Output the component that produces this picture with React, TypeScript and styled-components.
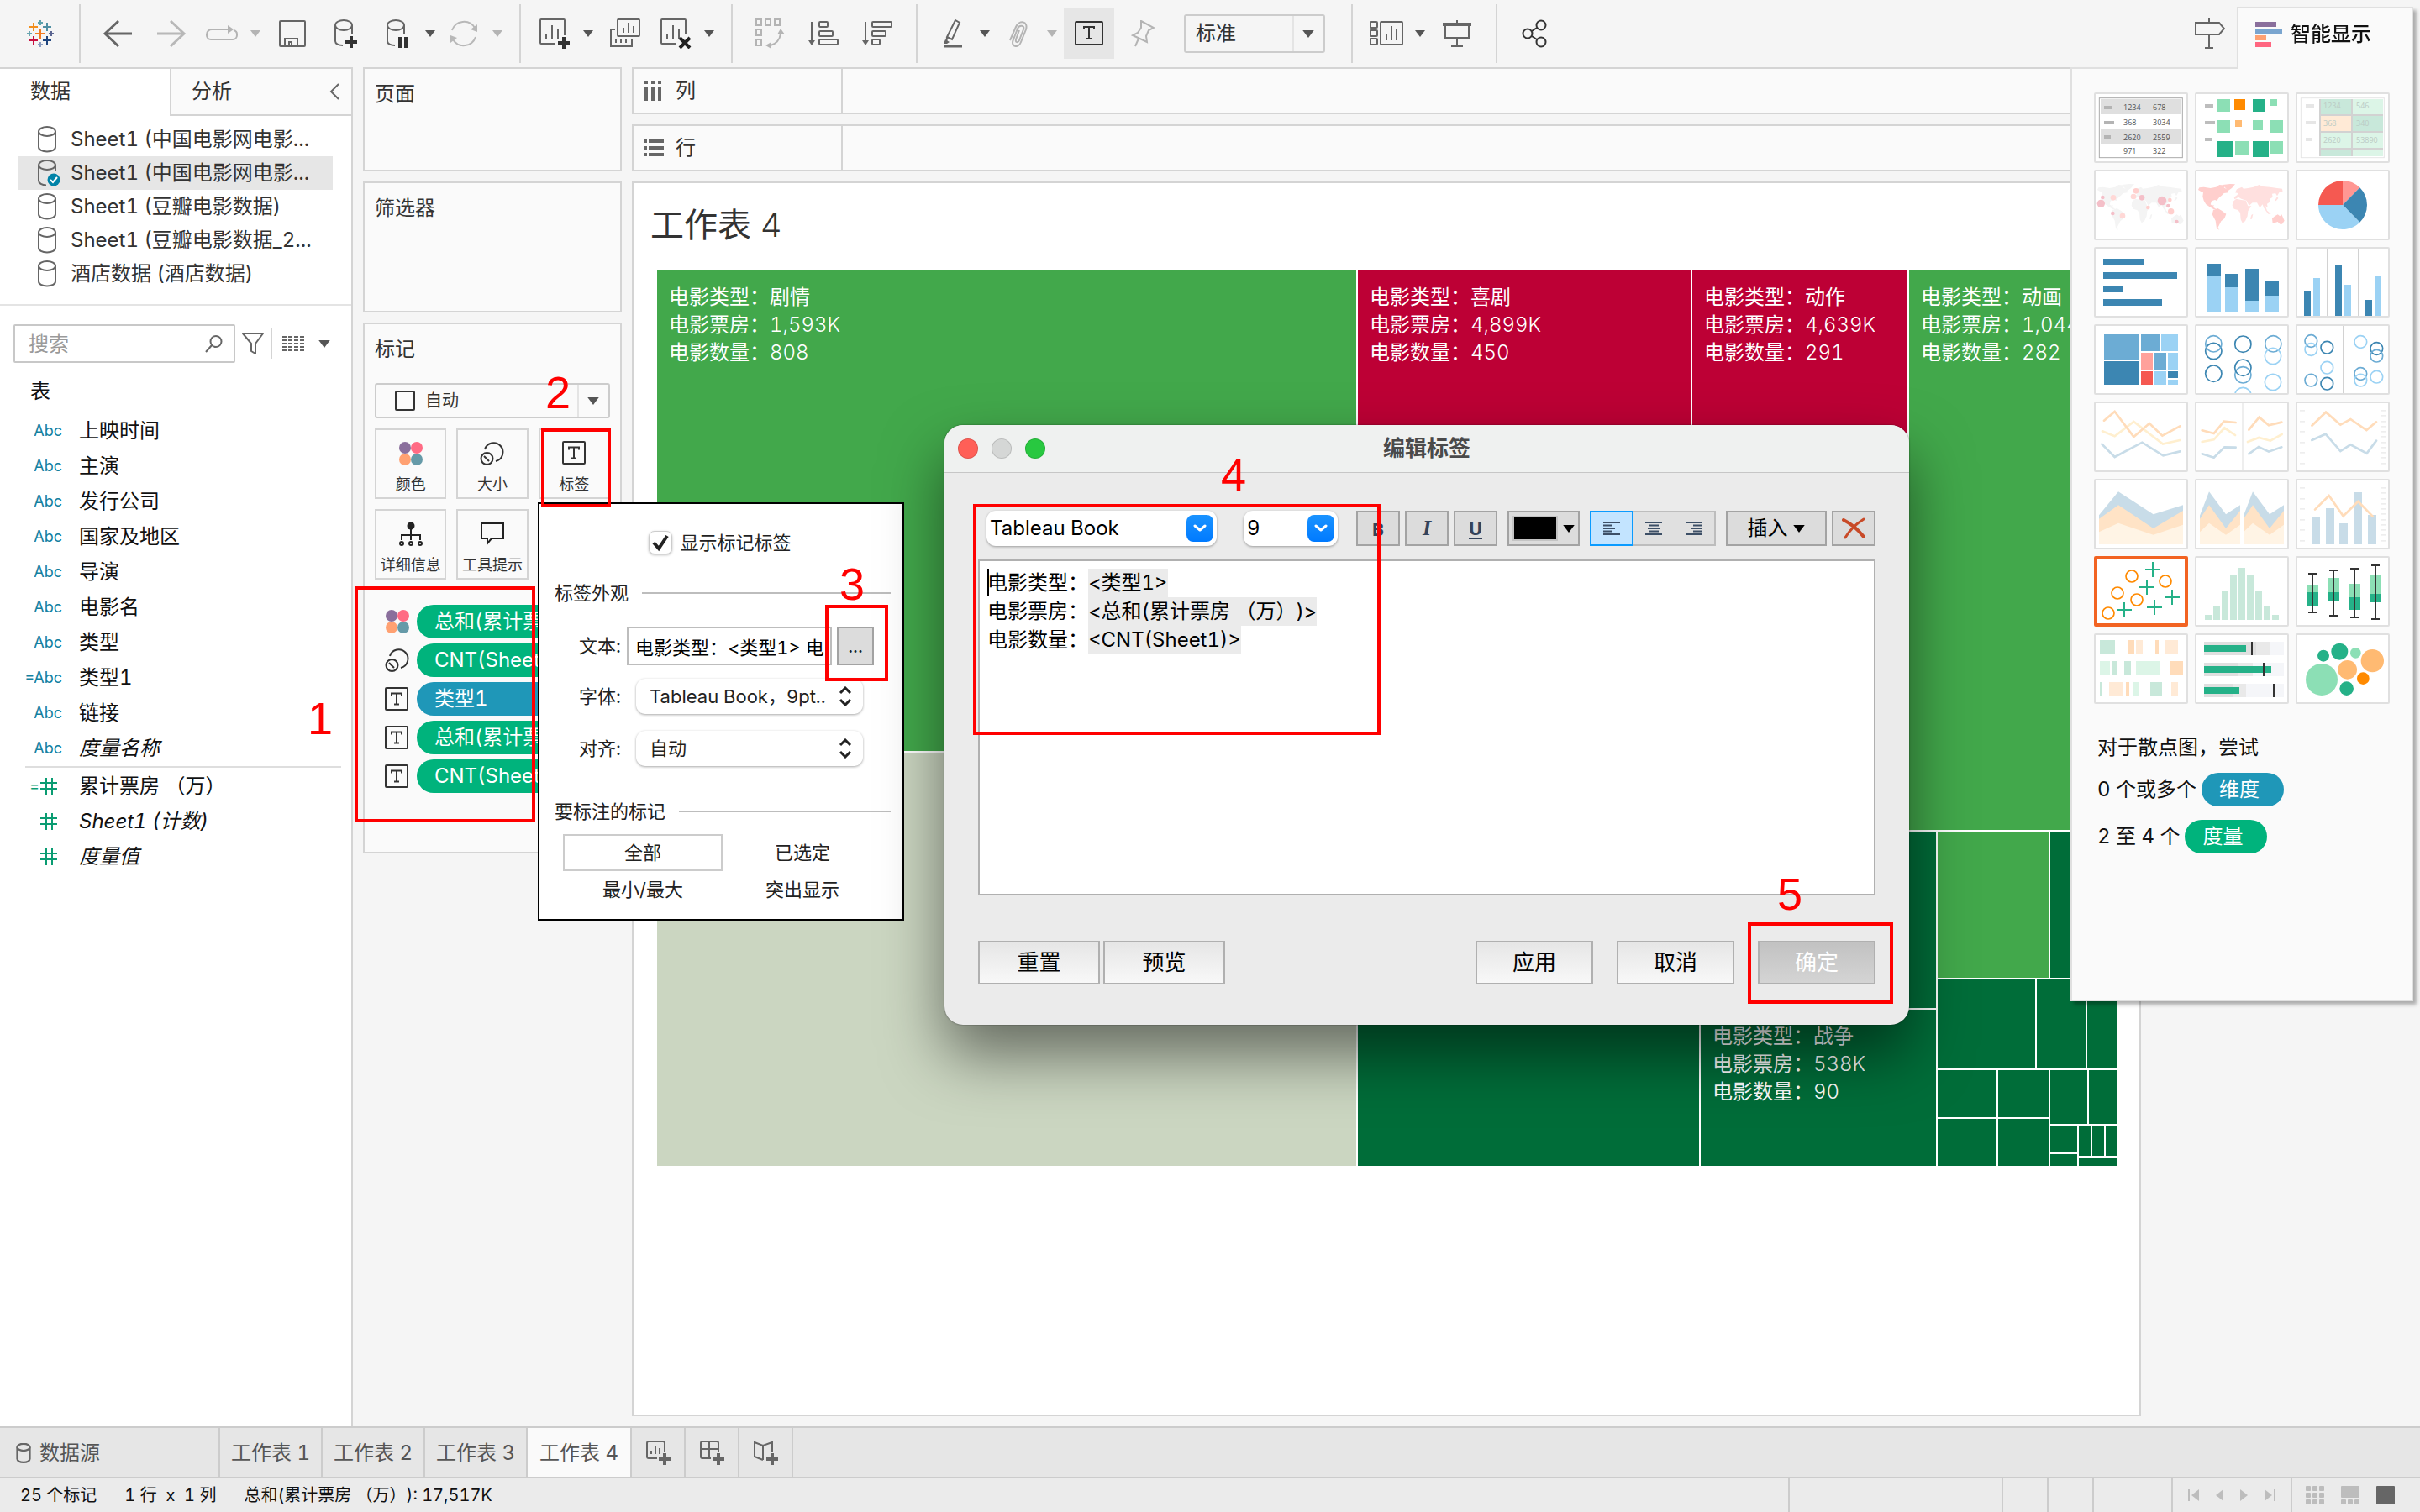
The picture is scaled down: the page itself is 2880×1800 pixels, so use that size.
import React from "react";
import styled, { createGlobalStyle, css } from "styled-components";

const font = `Inter, "Noto Sans CJK SC", sans-serif`;
const line = "#d4d4d4";

const GlobalStyle = createGlobalStyle`
  *, *::before, *::after { box-sizing: border-box; }
  body { margin: 0; background: #f5f5f5; font-family: ${font}; font-size: 24px; line-height: 32px; color: #333; text-spacing-trim: space-all; font-variant-numeric: tabular-nums; }
  button, input, select { font: inherit; color: inherit; margin: 0; padding: 0; border: 0; background: none; border-radius: 0; outline: none; text-spacing-trim: inherit; }
  select { appearance: none; }
  ul { list-style: none; margin: 0; padding: 0; }
  h1, h2, p { margin: 0; font-weight: 400; font-size: inherit; }
  svg { display: block; flex: none; }
`;

/* ---------- icons ---------- */

type SvgProps = { w: number; h: number; box?: string; color?: string; sw?: number; children: React.ReactNode };
const Svg = ({ w, h, box, color = "#666", sw = 2, children }: SvgProps) => (
  <svg width={w} height={h} viewBox={box ?? `0 0 ${w} ${h}`} fill="none" stroke={color} strokeWidth={sw} aria-hidden="true">
    {children}
  </svg>
);

const cross = (x: number, y: number, r: number, c: string, sw = 2) => (
  <path key={`${x}-${y}`} d={`M${x - r} ${y}H${x + r}M${x} ${y - r}V${y + r}`} stroke={c} strokeWidth={sw} />
);

const LogoIcon = () => (
  <Svg w={34} h={34}>
    {cross(17, 17, 6, "#f47b20", 2)}
    {cross(9, 9, 5, "#f28e1c")}
    {cross(25, 9, 5, "#4f8fa3")}
    {cross(9, 25, 5, "#c8103f")}
    {cross(25, 25, 5, "#1f457e")}
    {cross(17, 4, 3, "#5fa2ad")}
    {cross(4, 17, 3, "#6aa5b0")}
    {cross(30, 17, 3, "#5b6591")}
    {cross(17, 30, 3, "#8a9cc0")}
  </Svg>
);
const BackIcon = () => (
  <Svg w={36} h={34} sw={3}><path d="M19 2L3 17L19 32M3 17H35" /></Svg>
);
const ForwardIcon = () => (
  <Svg w={36} h={34} sw={3} color="#b8b8b8"><path d="M17 2L33 17L17 32M33 17H1" /></Svg>
);
const RedoIcon = () => (
  <Svg w={40} h={20} color="#b4b4b4">
    <path d="M28 5H8a6 6 0 0 0-6 6v1a5 5 0 0 0 5 5H33a5 5 0 0 0 5-5V11a5 5 0 0 0-4-5" />
    <path d="M27 0L34 5L27 10Z" fill="#b4b4b4" stroke="none" />
  </Svg>
);
const SaveIcon = () => (
  <Svg w={32} h={32}>
    <rect x={1} y={1} width={30} height={30} rx={1} />
    <path d="M7 31V22H22V31M12 31V26H15V31" />
  </Svg>
);
const DbIcon = ({ small = false }: { small?: boolean }) => (
  <Svg w={small ? 18 : 24} h={small ? 24 : 32} box="0 0 24 32" sw={small ? 3 : 2}>
    <ellipse cx={12} cy={6.5} rx={10} ry={5.5} />
    <path d="M2 6V25C2 28 6 30.5 12 30.5S22 28 22 25V6" />
  </Svg>
);
const DbCheckIcon = () => (
  <Svg w={28} h={32}>
    <ellipse cx={12} cy={6.5} rx={10} ry={5.5} />
    <path d="M2 6V25C2 28 6 30.5 11 30.5M22 6V14" />
    <circle cx={20} cy={24} r={7.5} fill="#0083a8" stroke="none" />
    <path d="M16 24L19 27L24 21" stroke="#fff" />
  </Svg>
);
const DbPlusIcon = () => (
  <Svg w={30} h={36}>
    <ellipse cx={12} cy={8} rx={10} ry={6} />
    <path d="M2 8V27C2 30 6 32 11 32M22 8V19" />
    <path d="M21 21V35M14 28H28" stroke="#333" strokeWidth={4} />
  </Svg>
);
const DbPauseIcon = () => (
  <Svg w={28} h={36}>
    <ellipse cx={13} cy={8} rx={10} ry={6} />
    <path d="M3 8V27C3 30 7 32 12 32M23 8V18" />
    <path d="M18 22V35M25 22V35" stroke="#333" strokeWidth={4} />
  </Svg>
);
const RefreshIcon = () => (
  <Svg w={36} h={34} color="#b8b8b8">
    <path d="M4 13A15 15 0 0 1 31 10M32 21A15 15 0 0 1 5 24" />
    <path d="M34 6V15L26 12ZM2 28V19L10 22Z" fill="#b8b8b8" stroke="none" />
  </Svg>
);
const SheetPlusIcon = () => (
  <Svg w={38} h={36}>
    <path d="M20 30H3a1 1 0 0 1-1-1V2a1 1 0 0 1 1-1H30a1 1 0 0 1 1 1V20M9 24V18M16 24V8M23 24V13" />
    <path d="M30 22V36M23 29H37" stroke="#333" strokeWidth={4} />
  </Svg>
);
const DuplicateIcon = () => (
  <Svg w={38} h={36}>
    <rect x={10} y={1} width={26} height={20} rx={1} />
    <path d="M17 17V11M23 17V5M29 17V9M7 13H2V33H27V24M8 29V24M14 29V24M20 29V24" />
  </Svg>
);
const ClearIcon = () => (
  <Svg w={38} h={36}>
    <path d="M20 30H3a1 1 0 0 1-1-1V2a1 1 0 0 1 1-1H30a1 1 0 0 1 1 1V19M9 24V18M16 24V8M23 24V13" />
    <path d="M24 23L36 35M36 23L24 35" stroke="#222" strokeWidth={4} />
  </Svg>
);
const SwapIcon = () => (
  <Svg w={36} h={36} color="#b4b4b4">
    <rect x={2} y={1} width={6} height={7} /><rect x={13} y={1} width={6} height={7} /><rect x={24} y={1} width={6} height={7} />
    <rect x={2} y={13} width={6} height={7} /><rect x={2} y={25} width={6} height={7} />
    <path d="M31 18C30 26 26 30 19 32" />
    <path d="M27 19H36L31 12ZM20 28V36L13 32Z" fill="#b4b4b4" stroke="none" />
  </Svg>
);
const SortAscIcon = () => (
  <Svg w={36} h={30}>
    <path d="M4 1V26" /><path d="M0 23H8L4 29Z" fill="#666" stroke="none" />
    <rect x={13} y={1} width={10} height={6} rx={1} /><rect x={13} y={12} width={16} height={6} rx={1} /><rect x={13} y={22} width={22} height={6} rx={1} />
  </Svg>
);
const SortDescIcon = () => (
  <Svg w={36} h={30}>
    <path d="M4 1V26" /><path d="M0 23H8L4 29Z" fill="#666" stroke="none" />
    <rect x={12} y={1} width={23} height={6} rx={1} /><rect x={12} y={12} width={16} height={6} rx={1} /><rect x={12} y={22} width={9} height={6} rx={1} />
  </Svg>
);
const PenIcon = () => (
  <Svg w={28} h={34}>
    <path d="M19 1L24 4L15 24L9 21ZM9 22L8 28" />
    <path d="M5 29L7 24L12 27L9 29Z" fill="#666" stroke="none" />
    <path d="M5 32H27" strokeWidth={3} />
  </Svg>
);
const ClipIcon = () => (
  <Svg w={26} h={32} color="#b4b4b4">
    <path d="M14 12L10 23C9 27 13 27 14 24L19 11C21 6 14 5 12 10L7 23C3 32 13 34 16 26L22 11C25 1 14-1 10 8L3 24" />
  </Svg>
);
const TextBoxIcon = () => (
  <Svg w={28} h={28} color="#333">
    <rect x={1} y={1} width={26} height={26} rx={1} />
    <path d="M8 10.5V7.5H20V10.5M14 7.5V20.5M11 20.5H17" />
  </Svg>
);
const LabelToolIcon = () => (
  <Svg w={34} h={30} color="#333">
    <rect x={1} y={1} width={32} height={27} rx={1} />
    <path d="M11 10V7H23V10M17 7V21M14 21H20" />
  </Svg>
);
const PinIcon = () => (
  <Svg w={28} h={32} color="#b4b4b4">
    <path d="M12 1L27 9L21 12L18 19L19 26L2 18L8 15L12 9ZM9 22L5 31" />
  </Svg>
);
const CardsIcon = () => (
  <Svg w={40} h={30}>
    <rect x={1} y={1} width={8} height={7} rx={1} /><rect x={1} y={11} width={8} height={7} rx={1} /><rect x={1} y={21} width={8} height={7} rx={1} />
    <rect x={13} y={1} width={26} height={27} rx={1} />
    <path d="M20 23V16M26 23V6M32 23V10" />
  </Svg>
);
const PresentIcon = () => (
  <Svg w={36} h={34}>
    <path d="M1 6H35" strokeWidth={4} /><path d="M18 1V6M4 8V22H32V8M18 22V32M11 32H25" />
  </Svg>
);
const ShareIcon = () => (
  <Svg w={30} h={34} color="#333">
    <circle cx={7} cy={17} r={5.5} /><circle cx={23} cy={7} r={5.5} /><circle cx={23} cy={27} r={5.5} />
    <path d="M12 14L18 10M12 20L18 24" />
  </Svg>
);
const SignpostIcon = () => (
  <Svg w={36} h={38}>
    <path d="M1 6H29L35 13L29 20H1ZM17 1V6M17 20V36M12 36H22" />
  </Svg>
);
const Caret = ({ w = 12, h = 8, color = "#555" }: { w?: number; h?: number; color?: string }) => (
  <Svg w={w} h={h} box="0 0 12 8"><path d="M0 0H12L6 8Z" fill={color} stroke="none" /></Svg>
);
const ChevronLeft = () => <Svg w={12} h={20}><path d="M11 1L2 10L11 19" /></Svg>;
const SearchIcon = () => <Svg w={22} h={22}><circle cx={13} cy={8.5} r={6.5} /><path d="M8 13L1 21" /></Svg>;
const FilterIcon = () => <Svg w={26} h={26}><path d="M1 1H25L16 13V25L11 22V13Z" strokeLinejoin="round" /></Svg>;
const ListIcon = () => (
  <Svg w={26} h={20}><path d="M0 2H26M0 6H26M0 10H26M0 14H26M0 18H26" strokeDasharray="5 2" /></Svg>
);
const ColumnsIcon = () => (
  <Svg w={22} h={24} sw={4}><path d="M3 0V4M11 0V4M19 0V4M3 7V24M11 7V24M19 7V24" /></Svg>
);
const RowsIcon = () => (
  <Svg w={24} h={20} sw={4}><path d="M0 2H4M0 10H4M0 18H4M6 2H24M6 10H24M6 18H24" /></Svg>
);
const ColorIcon = () => (
  <Svg w={30} h={30}>
    <g stroke="none">
      <circle cx={8} cy={8} r={7} fill="#8a6f9c" /><circle cx={22} cy={8} r={7} fill="#ff6b84" />
      <circle cx={8} cy={22} r={7} fill="#ffa172" /><circle cx={22} cy={22} r={7} fill="#659aa8" />
    </g>
  </Svg>
);
const SizeIcon = () => (
  <Svg w={30} h={30} color="#333">
    <circle cx={8.5} cy={21} r={7} /><path d="M5 18L11 24M6 10A11 11 0 1 1 19 24" />
  </Svg>
);
const DetailIcon = () => (
  <Svg w={28} h={30} color="#222">
    <circle cx={14} cy={5} r={4.5} fill="#222" stroke="none" />
    <path d="M14 9V22M3 22V16H25V22" /><circle cx={3} cy={26} r={2} /><circle cx={14} cy={26} r={2} /><circle cx={25} cy={26} r={2} />
  </Svg>
);
const TooltipIcon = () => (
  <Svg w={30} h={28} color="#222"><path d="M2 2H28V20H14L9 26V20H2Z" /></Svg>
);
const HashIcon = () => (
  <Svg w={22} h={22} color="#0a9c72"><path d="M8 1V21M15 1V21M1 7H21M1 14H21" /></Svg>
);
const UpDownIcon = () => (
  <Svg w={18} h={24} color="#222" sw={3}><path d="M3 8L9 2L15 8M3 16L9 22L15 16" /></Svg>
);
const AlignIcon = ({ kind }: { kind: "left" | "center" | "right" }) => {
  const long = kind === "left" ? [0, 14] : kind === "center" ? [3, 17] : [6, 20];
  const short = kind === "left" ? [0, 11] : kind === "center" ? [4, 16] : [9, 20];
  return (
    <Svg w={20} h={18} color="#3d4f66">
      <path d={`M0 2H20M${short[0]} 5.5H${short[1]}M${long[0]} 9H${long[1]}M${short[0]} 12.5H${short[1]}M0 16H20`} />
    </Svg>
  );
};
const DeleteIcon = () => (
  <Svg w={28} h={26} color="#c84a28" sw={4}><path d="M2 3C10 7 19 14 26 23" strokeLinecap="round" /><path d="M26 2C18 7 10 14 4 24" strokeWidth={3} strokeLinecap="round" /></Svg>
);
const CheckIcon = () => (
  <Svg w={28} h={28} color="#222" sw={4}><path d="M6 14L12 21L22 6" /></Svg>
);
const ShowMeIcon = () => (
  <Svg w={32} h={30}>
    <g stroke="none"><rect width={25} height={6} fill="#8a6f9c" /><rect y={8} width={32} height={6} fill="#7aa5cf" /><rect y={16} width={13} height={6} fill="#ffa172" /><rect y={24} width={19} height={6} fill="#ff6680" /></g>
  </Svg>
);
const NewSheetIcon = () => (
  <Svg w={30} h={30}><path d="M14 21H4a2 2 0 0 1-2-2V3a2 2 0 0 1 2-2H21a2 2 0 0 1 2 2V13M7 16V12M12 16V7M17 16V9" /><path d="M23 15V29M16 22H30" strokeWidth={4} /></Svg>
);
const NewDashIcon = () => (
  <Svg w={30} h={30}><path d="M14 21H4a2 2 0 0 1-2-2V3a2 2 0 0 1 2-2H21a2 2 0 0 1 2 2V13M2 10H23M12 1V21" /><path d="M23 15V29M16 22H30" strokeWidth={4} /></Svg>
);
const NewStoryIcon = () => (
  <Svg w={30} h={30}><path d="M12 23L2 19V2L12 6L23 2V13M12 6V23" /><path d="M23 15V29M16 22H30" strokeWidth={4} /></Svg>
);

/* ---------- chart thumbnails ---------- */

const B1 = "#3c86b2", B2 = "#6cacd4", B3 = "#9bd2f4";
const G1 = "#25b188", G2 = "#8cdfb5", O1 = "#ff8a00", O2 = "#ffba72";
type R = [number, number, number, number, string];
const rects = (list: R[]) => list.map(([x, y, w, h, f], i) => <rect key={i} x={x} y={y} width={w} height={h} fill={f} />);
type C = [number, number, number, string];
const rings = (list: C[]) => list.map(([x, y, r, c], i) => <circle key={i} cx={x} cy={y} r={r} fill="none" stroke={c} strokeWidth={5} />);
const discs = (list: C[]) => list.map(([x, y, r, c], i) => <circle key={i} cx={x} cy={y} r={r} fill={c} />);
const poly = (d: string, c: string) => <path d={d} fill="none" stroke={c} strokeWidth={8} strokeLinecap="round" />;
const ticks = (x: number, ys: number[]) => ys.map((y) => <rect key={`${x}${y}`} x={x} y={y - 3} width={18} height={5} fill="#eee" />);
const words = (list: [number, number, string][], c: string) =>
  list.map(([x, y, t]) => <text key={t} x={x} y={y} fontSize={27} fill={c} fontFamily={`"Open Sans", sans-serif`}>{t}</text>);

const WorldMap = ({ west, east }: { west: string; east: string }) => (
  <>
    <g fill={west}>
      <path d="M6 66L10 58L26 56L50 60L70 56L82 48L106 50L98 58L112 66L114 76L98 78L90 86L82 92L76 100L74 106L66 102L54 106L50 118L56 122L62 120L60 128L70 134L62 136L46 126L34 118L26 104L22 90L24 76L16 72Z" />
      <path d="M94 48L120 45L138 46L126 60L112 70L106 62Z" />
      <path d="M60 138L76 132L90 140L106 152L100 168L88 178L82 190L76 202L82 209L72 204L68 176L56 154Z" />
      <path d="M270 168L280 160L290 154L298 160L304 154L314 176L306 188L298 188L290 180L272 186Z" />
    </g>
    <g fill={east}>
      <path d="M130 108L142 98L160 102L176 104L184 124L196 124L184 142L182 160L174 178L164 184L158 172L156 148L148 138L134 134L128 122Z" />
      <path d="M134 92L146 84L148 78L138 76L144 64L162 56L168 62L184 60L204 56L224 48L236 54L262 56L288 60L306 62L308 74L296 74L288 88L282 78L270 80L272 92L262 98L264 108L252 116L254 128L246 124L252 140L266 152L256 152L240 130L236 118L226 130L216 112L200 112L188 122L178 104L160 98L150 92L136 100Z" />
      <path d="M196 156L202 152L198 170L192 170ZM280 104L288 90L292 96L284 106Z" />
    </g>
  </>
);

const thumbs: { name: string; art: React.ReactNode }[] = [
  { name: "文本表", art: <><rect x={13} y={14} width={297} height={213} fill="#fff" stroke="#aaa" strokeWidth={3} />{rects([[18, 18, 288, 54, "#dfdfdf"], [18, 126, 288, 54, "#dfdfdf"], [30, 42, 30, 12, "#b4b4b4"], [30, 96, 36, 12, "#b4b4b4"], [30, 147, 24, 12, "#b4b4b4"]])}{words([[99, 56, "1234"], [204, 56, "678"], [99, 110, "368"], [204, 110, "3034"], [99, 164, "2620"], [204, 164, "2559"], [99, 212, "971"], [204, 212, "322"]], "#555")}</> },
  { name: "热图", art: rects([[30, 36, 30, 12, "#bdbdbd"], [30, 96, 36, 12, "#bdbdbd"], [30, 156, 24, 12, "#bdbdbd"], [75, 18, 45, 45, G2], [135, 18, 39, 39, O1], [201, 18, 45, 45, G1], [264, 18, 24, 24, G2], [75, 93, 45, 45, G2], [138, 93, 24, 24, O2], [201, 93, 36, 36, G2], [264, 93, 45, 45, G2], [75, 168, 57, 57, G1], [138, 168, 48, 48, G2], [201, 168, 57, 57, G1], [264, 168, 45, 45, G2]]) },
  { name: "突出显示表", art: <><rect x={13} y={14} width={297} height={213} fill="#fff" stroke="#e6e6e6" strokeWidth={3} />{rects([[78, 18, 228, 204, "#d2d2d2"], [84, 18, 108, 54, "#c8e8da"], [198, 18, 108, 54, "#dcf5e7"], [84, 78, 108, 54, "#ffead6"], [198, 78, 108, 54, "#c8e8da"], [84, 138, 108, 54, "#dcf5e7"], [198, 138, 108, 54, "#dcf5e7"], [84, 198, 108, 24, "#c8e8da"], [198, 198, 108, 24, "#dcf5e7"], [30, 36, 30, 12, "#e6e6e6"], [30, 96, 36, 12, "#e6e6e6"], [30, 156, 24, 12, "#e6e6e6"]])}{words([[93, 51, "1234"], [210, 51, "546"], [93, 114, "368"], [210, 114, "340"], [93, 174, "2620"], [210, 174, "53890"]], "#bccbc4")}</> },
  { name: "符号地图", art: <><WorldMap west="#f4f4f4" east="#f4f4f4" />{discs([[19, 115, 14, "#f4bfc8"], [25, 93, 7, "#f4bfc8"], [63, 94, 10, "#ffd8d6"], [61, 150, 7, "#f4bfc8"], [96, 159, 10, "#ffd8d6"], [144, 70, 10, "#ffcfcd"], [135, 90, 10, "#ffd8d6"], [165, 94, 10, "#f4bfc8"], [187, 129, 7, "#ffcfcd"], [237, 105, 16, "#f4bfc8"], [265, 102, 7, "#ffcfcd"], [259, 123, 7, "#f4bfc8"], [269, 143, 11, "#ffcfcd"], [289, 180, 7, "#f4bfc8"]])}</> },
  { name: "地图", art: <WorldMap west="#ffcfcd" east="#ffe0df" /> },
  { name: "饼图", art: <><path d="M162 120V33A87 87 0 0 1 223 58Z" fill="#ff9793" /><path d="M162 120L223 58A87 87 0 0 1 223 182Z" fill={B1} /><path d="M162 120L223 182A87 87 0 0 1 75 120Z" fill={B3} /><path d="M162 120H75A87 87 0 0 1 162 33Z" fill="#f55951" /></> },
  { name: "水平条", art: rects([[27, 36, 144, 24, B1], [27, 84, 264, 24, B1], [27, 132, 72, 24, B1], [27, 180, 210, 24, B1]]) },
  { name: "堆叠条", art: rects([[39, 54, 48, 42, B1], [39, 96, 48, 132, B3], [102, 90, 48, 48, B1], [102, 138, 48, 90, B3], [174, 72, 48, 114, B1], [174, 186, 48, 42, B3], [246, 114, 48, 54, B1], [246, 168, 48, 60, B3]]) },
  { name: "并排条", art: rects([[105, 0, 6, 240, "#d2d2d2"], [216, 0, 6, 240, "#d2d2d2"], [24, 153, 24, 87, B1], [57, 105, 24, 135, B3], [135, 60, 24, 180, B1], [168, 129, 24, 111, B3], [243, 183, 24, 57, B1], [276, 96, 24, 144, B3]]) },
  { name: "树状图", art: rects([[30, 30, 126, 90, B2], [30, 126, 126, 84, B1], [162, 30, 66, 60, B2], [234, 30, 60, 60, B3], [162, 96, 42, 60, "#ffa19b"], [210, 96, 42, 60, B2], [258, 96, 36, 60, B3], [162, 162, 42, 48, "#f55951"], [210, 162, 42, 48, B3], [258, 162, 36, 24, B1], [258, 192, 36, 18, B3]]) },
  { name: "圆视图", art: rings([[61, 90, 29, B1], [61, 64, 29, B2], [61, 170, 29, B1], [166, 65, 29, B1], [166, 175, 29, B2], [166, 149, 29, B1], [166, 249, 29, B3], [274, 64, 29, B2], [273, 108, 29, B3], [273, 201, 29, B3]]) },
  { name: "并排圆", art: <>{rects([[162, 0, 6, 240, "#d2d2d2"]])}{rings([[49, 54, 22, B2], [49, 84, 22, B3], [106, 77, 22, B1], [106, 149, 22, B3], [49, 194, 22, B2], [106, 206, 22, B1], [226, 57, 22, B3], [283, 81, 22, B1], [283, 107, 22, B2], [226, 171, 22, B2], [226, 194, 22, B3], [283, 182, 22, B3]])}</> },
  { name: "线（连续）", art: <>{poly("M24 100L68 118L136 66L240 146L301 132", "#ffefcf")}{poly("M30 62L68 30L136 120L192 72L238 116L301 82", "#ffdcba")}{poly("M22 146L68 192L166 140L241 187L301 172", "#c8dce8")}</> },
  { name: "线（离散）", art: <>{rects([[162, 0, 6, 240, "#eee"]])}{poly("M20 138L62 130L100 88L138 114M183 138L223 123L264 134L305 111", "#ffefcf")}{poly("M20 97L62 108L98 65L140 69M187 95L224 50L258 79L304 68", "#ffdcba")}{poly("M20 181L62 194L100 157L140 158M187 181L222 156L258 173L304 157", "#c8dce8")}</> },
  { name: "双线", art: <>{ticks(9, [27, 66, 102, 141, 177, 216])}{ticks(300, [27, 45, 66, 84, 102, 120, 141, 159, 177, 195, 216])}{poly("M52 80L102 32L154 77L190 57L247 96L282 67", "#ffdcba")}{poly("M52 132L101 110L154 171L190 148L248 179L282 134", "#c8dce8")}</> },
  { name: "面积图（连续）", art: <><path d="M12 124L81 40L206 121L312 88V228H12Z" fill="#c8dce8" /><path d="M12 137L81 88L206 171L312 108V228H12Z" fill="#ffe3c6" /><path d="M12 184L81 152L206 194L312 158V228H12Z" fill="#fff4e5" /></> },
  { name: "面积图（离散）", art: <>{[0, 156].map((x) => <g key={x} transform={`translate(${x} 0)`}><path d="M12 125L45 40L105 121L156 88V228H12Z" fill="#c8dce8" /><path d="M12 137L45 88L105 171L156 108V228H12Z" fill="#ffe3c6" /><path d="M12 184L45 152L105 194L156 158V228H12Z" fill="#fff4e5" /></g>)}</> },
  { name: "双组合", art: <>{ticks(9, [27, 66, 102, 141, 177, 216])}{ticks(300, [27, 45, 66, 84, 102, 120, 141, 159, 177, 195, 216])}{rects([[51, 129, 30, 99, "#c8dce8"], [102, 99, 30, 129, "#c8dce8"], [150, 153, 30, 75, "#c8dce8"], [201, 42, 30, 186, "#c8dce8"], [252, 123, 30, 105, "#c8dce8"]])}{poly("M63 104L113 54L164 127L217 75L269 128", "#ffdcba")}</> },
  { name: "散点图", art: <>{rings([[45, 198, 21, O1], [78, 126, 21, O1], [129, 66, 21, O1], [147, 150, 21, O1], [249, 84, 21, O1]])}{cross(204, 42, 27, G1, 6)}{cross(183, 105, 27, G1, 6)}{cross(273, 141, 27, G1, 6)}{cross(210, 177, 27, G1, 6)}{cross(102, 186, 27, G1, 6)}</> },
  { name: "直方图", art: rects([[30, 204, 24, 18, "#c8e8da"], [60, 174, 24, 48, "#c8e8da"], [90, 120, 24, 102, "#c8e8da"], [120, 60, 24, 162, "#c8e8da"], [150, 36, 24, 186, "#c8e8da"], [180, 60, 24, 162, "#c8e8da"], [210, 120, 24, 102, "#c8e8da"], [240, 174, 24, 48, "#c8e8da"], [270, 204, 24, 18, "#c8e8da"]]) },
  { name: "盒须图", art: <>{rects([[33, 99, 42, 24, G2], [33, 123, 42, 51, G1], [108, 72, 42, 51, G2], [108, 123, 42, 30, G1], [183, 93, 42, 48, G2], [183, 141, 42, 45, G1], [258, 60, 42, 69, G2], [258, 129, 42, 30, G1]])}<path d="M54 57V195M39 57H69M39 195H69M129 45V207M114 45H144M114 207H144M204 39V213M189 39H219M189 213H219M279 27V219M264 27H294M264 219H294" stroke="#333" strokeWidth={6} /></> },
  { name: "甘特图", art: rects([[15, 18, 54, 48, "#c8e8da"], [114, 18, 24, 48, "#ffdcba"], [144, 18, 24, 48, "#ffead6"], [213, 18, 12, 48, "#ffdcba"], [246, 18, 48, 48, "#ffead6"], [15, 93, 36, 48, "#dcf5e7"], [57, 93, 18, 48, "#c8e8da"], [102, 93, 24, 48, "#c8e8da"], [144, 93, 87, 48, "#dcf5e7"], [264, 93, 48, 48, "#ffdcba"], [15, 168, 9, 48, "#c8e8da"], [48, 168, 51, 48, "#ffead6"], [108, 168, 12, 48, "#ffdcba"], [132, 168, 24, 48, "#dcf5e7"], [195, 168, 42, 48, "#c8e8da"], [270, 168, 24, 48, "#ffead6"]]) },
  { name: "靶心图", art: rects([[27, 24, 285, 48, "#f5f6f9"], [27, 24, 237, 48, "#e9e9e9"], [27, 24, 186, 48, "#dfdfdf"], [27, 99, 285, 48, "#f5f6f9"], [27, 99, 174, 48, "#e9e9e9"], [27, 99, 120, 48, "#dfdfdf"], [27, 174, 285, 48, "#f5f6f9"], [27, 174, 150, 48, "#e9e9e9"], [27, 174, 102, 48, "#dfdfdf"], [27, 36, 150, 24, G1], [27, 111, 240, 24, G1], [27, 186, 126, 24, G1], [195, 24, 6, 48, "#333"], [237, 99, 6, 48, "#333"], [273, 174, 6, 48, "#333"]]) },
  { name: "填充气泡图", art: discs([[87, 159, 57, G2], [93, 74, 21, G1], [151, 59, 30, G1], [208, 64, 19, G2], [268, 92, 41, O2], [179, 124, 34, O2], [235, 155, 22, O1], [176, 191, 25, G1]]) },
];

/* ---------- frame and toolbar ---------- */

const Page = styled.div`
  position: relative;
  display: flex;
  flex-direction: column;
  min-height: 100vh;
  overflow: hidden;
`;
const Toolbar = styled.header`
  display: flex;
  align-items: center;
  height: 80px;
`;
const Logo = styled.div`padding: 0 15px 0 31px;`;
const Divider = styled.span`
  width: 2px;
  height: 70px;
  margin: 0 12px 0 14px;
  background: ${line};
`;
const Tool = styled.button<{ $active?: boolean; $push?: boolean }>`
  display: grid;
  place-items: center;
  width: 60px;
  height: 60px;
  margin: 0 2px;
  background: ${(p) => (p.$active ? "#e6e6e6" : "none")};
  ${(p) => p.$push && css`margin: 0 220px 0 auto;`}
`;
const SplitTool = styled.button`
  display: grid;
  grid-template-columns: 56px 24px;
  place-items: center;
  height: 60px;
`;
const SelectBox = styled.div<{ $w?: number; $h: number }>`
  display: grid;
  grid-template-columns: 1fr 37px;
  align-items: center;
  width: ${(p) => (p.$w ? `${p.$w}px` : "auto")};
  height: ${(p) => p.$h}px;
  border: 2px solid #ccc;
  border-radius: 3px;
  > * { grid-row: 1; }
  > select { grid-column: 1 / 3; height: 100%; width: 100%; padding-left: 12px; }
  > svg { grid-column: 2; justify-self: center; pointer-events: none; }
  > i { grid-column: 2; height: 100%; border-left: 2px solid #e4e4e4; pointer-events: none; }
`;
const ToolSelect = styled(SelectBox)`margin: 0 17px;`;

const split = (label: string, icon: React.ReactNode, off = false) => (
  <SplitTool aria-label={label}>{icon}<Caret color={off ? "#b4b4b4" : "#555"} /></SplitTool>
);

const TopBar = () => (
  <Toolbar>
    <Logo><LogoIcon /></Logo>
    <Divider />
    <Tool aria-label="撤消"><BackIcon /></Tool>
    <Tool aria-label="重做"><ForwardIcon /></Tool>
    {split("重播", <RedoIcon />, true)}
    <Tool aria-label="保存"><SaveIcon /></Tool>
    <Tool aria-label="新建数据源"><DbPlusIcon /></Tool>
    {split("暂停更新", <DbPauseIcon />)}
    {split("刷新", <RefreshIcon />, true)}
    <Divider />
    {split("新建工作表", <SheetPlusIcon />)}
    <Tool aria-label="复制"><DuplicateIcon /></Tool>
    {split("清除", <ClearIcon />)}
    <Divider />
    <Tool aria-label="交换行和列"><SwapIcon /></Tool>
    <Tool aria-label="升序"><SortAscIcon /></Tool>
    <Tool aria-label="降序"><SortDescIcon /></Tool>
    <Divider />
    {split("突出显示", <PenIcon />)}
    {split("分组", <ClipIcon />, true)}
    <Tool aria-label="显示标记标签" $active><LabelToolIcon /></Tool>
    <Tool aria-label="固定轴"><PinIcon /></Tool>
    <ToolSelect $w={168} $h={46}>
      <select aria-label="适合"><option>标准</option></select>
      <i /><Caret w={14} h={9} />
    </ToolSelect>
    <Divider />
    {split("显示卡", <CardsIcon />)}
    <Tool aria-label="演示模式"><PresentIcon /></Tool>
    <Divider />
    <Tool aria-label="共享"><ShareIcon /></Tool>
    <Tool aria-label="数据指南" $push><SignpostIcon /></Tool>
  </Toolbar>
);

/* ---------- data pane ---------- */

const Body = styled.div`
  display: flex;
  flex: 1;
  gap: 12px;
`;
const Sidebar = styled.aside`
  flex: none;
  width: 420px;
  background: #fff;
  border: solid ${line};
  border-width: 2px 2px 0 0;
`;
const PaneTabs = styled.div`
  display: grid;
  grid-template-columns: 202px 1fr;
  height: 56px;
`;
const PaneTab = styled.button<{ $idle?: boolean }>`
  display: flex;
  align-items: center;
  justify-content: space-between;
  padding: 0 14px 2px 36px;
  ${(p) => p.$idle && css`
    padding: 0 14px 0 24px;
    background: #fafafa;
    border: solid ${line};
    border-width: 0 0 2px 2px;
  `}
`;
const Sources = styled.ul`
  padding: 8px 22px 16px;
  border-bottom: 2px solid #e4e4e4;
`;
const Source = styled.li<{ $on?: boolean }>`
  display: flex;
  align-items: center;
  height: 40px;
  padding-left: 22px;
  white-space: nowrap;
  background: ${(p) => (p.$on ? "#e6e6e6" : "none")};
  > span { width: 40px; flex: none; }
`;
const SearchRow = styled.div`
  display: flex;
  align-items: center;
  gap: 8px;
  padding: 22px 24px 18px 16px;
`;
const SearchBox = styled.label`
  display: flex;
  align-items: center;
  width: 264px;
  height: 46px;
  padding: 0 12px 0 16px;
  border: 2px solid #c8c8c8;
  border-radius: 2px;
  > input { flex: 1; min-width: 0; height: 100%; }
  > input::placeholder { color: #9a9a9a; opacity: 1; }
`;
const PlainButton = styled.button`display: grid; place-items: center;`;
const ViewButton = styled(PlainButton)`
  grid-auto-flow: column;
  gap: 16px;
  height: 36px;
  padding-left: 12px;
  border-left: 2px solid ${line};
`;
const GroupTitle = styled.h2`
  padding: 0 36px 10px;
  color: #111;
`;
const Fields = styled.ul`
  color: #111;
  & + & {
    margin: 0 12px 0 30px;
    padding-top: 1px;
    border-top: 2px solid #dedede;
  }
  & + & > li { margin-left: -30px; }
`;
const Field = styled.li<{ $italic?: boolean }>`
  display: flex;
  align-items: center;
  height: 42px;
  font-style: ${(p) => (p.$italic ? "italic" : "normal")};
`;
const FieldType = styled.span<{ $measure?: boolean }>`
  display: flex;
  align-items: center;
  justify-content: flex-end;
  width: 94px;
  padding-right: ${(p) => (p.$measure ? 25 : 20)}px;
  font-size: 18px;
  font-style: normal;
  color: ${(p) => (p.$measure ? "#0a9c72" : "#14809f")};
`;

const sources = ["Sheet1 (中国电影网电影...", "Sheet1 (中国电影网电影...", "Sheet1 (豆瓣电影数据)", "Sheet1 (豆瓣电影数据_2...", "酒店数据 (酒店数据)"];
const dims = ["上映时间", "主演", "发行公司", "国家及地区", "导演", "电影名", "类型", "类型1", "链接", "度量名称"];
const measures = ["累计票房 （万）", "Sheet1 (计数)", "度量值"];

const DataPane = () => (
  <Sidebar>
    <PaneTabs>
      <PaneTab>数据</PaneTab>
      <PaneTab $idle>分析<ChevronLeft /></PaneTab>
    </PaneTabs>
    <Sources>
      {sources.map((s, i) => (
        <Source key={i} $on={i === 1}><span>{i === 1 ? <DbCheckIcon /> : <DbIcon />}</span>{s}</Source>
      ))}
    </Sources>
    <SearchRow>
      <SearchBox><input type="text" placeholder="搜索" aria-label="搜索" /><SearchIcon /></SearchBox>
      <PlainButton aria-label="筛选"><FilterIcon /></PlainButton>
      <ViewButton aria-label="视图"><ListIcon /><Caret w={16} h={9} /></ViewButton>
    </SearchRow>
    <GroupTitle>表</GroupTitle>
    <Fields>
      {dims.map((d) => (
        <Field key={d} $italic={d === "度量名称"}><FieldType>{d === "类型1" ? "=Abc" : "Abc"}</FieldType>{d}</Field>
      ))}
    </Fields>
    <Fields>
      {measures.map((m, i) => (
        <Field key={m} $italic={i > 0}><FieldType $measure>{i === 0 && "="}<HashIcon /></FieldType>{m}</Field>
      ))}
    </Fields>
  </Sidebar>
);

/* ---------- cards ---------- */

const Cards = styled.div`
  display: flex;
  flex: none;
  flex-direction: column;
  gap: 12px;
  width: 308px;
`;
const Card = styled.section<{ $h?: number }>`
  min-height: ${(p) => p.$h ?? 0}px;
  padding: 14px 12px;
  background: #fafafa;
  border: 2px solid ${line};
`;
const MarkSelect = styled(SelectBox)`
  margin: 24px 0 12px;
  font-size: 20px;
  > select { padding-left: 58px; }
  > b { grid-column: 1; width: 24px; height: 24px; margin-left: 22px; border: 2px solid #333; border-radius: 2px; pointer-events: none; }
`;
const MarkGrid = styled.div`
  display: grid;
  grid-template-columns: repeat(3, 1fr);
  gap: 12px;
`;
const MarkButton = styled.button`
  display: flex;
  flex-direction: column;
  align-items: center;
  justify-content: space-between;
  height: 84px;
  padding: 13px 0 3px;
  font-size: 18px;
  line-height: 24px;
  white-space: nowrap;
  border: 2px solid ${line};
`;
const Pills = styled.ul`
  display: grid;
  gap: 6px;
  padding: 30px 0 56px 12px;
`;
const PillRow = styled.li`
  display: grid;
  grid-template-columns: 38px 1fr;
  align-items: center;
`;
const Pill = styled.span<{ $blue?: boolean }>`
  height: 40px;
  padding: 0 21px;
  overflow: hidden;
  line-height: 40px;
  white-space: nowrap;
  color: #fff;
  background: ${(p) => (p.$blue ? "#1f97b8" : "#00b37c")};
  border-radius: 20px;
`;

const Shelves = () => (
  <Cards>
    <Card $h={124}>页面</Card>
    <Card $h={156}>筛选器</Card>
    <Card>
      <h2>标记</h2>
      <MarkSelect $h={42}>
        <select aria-label="标记类型"><option>自动</option></select>
        <b /><i /><Caret w={14} h={9} />
      </MarkSelect>
      <MarkGrid>
        <MarkButton><ColorIcon />颜色</MarkButton>
        <MarkButton><SizeIcon />大小</MarkButton>
        <MarkButton><TextBoxIcon />标签</MarkButton>
        <MarkButton><DetailIcon />详细信息</MarkButton>
        <MarkButton><TooltipIcon />工具提示</MarkButton>
      </MarkGrid>
      <Pills>
        <PillRow><ColorIcon /><Pill>总和(累计票..</Pill></PillRow>
        <PillRow><SizeIcon /><Pill>CNT(Sheet1)</Pill></PillRow>
        <PillRow><TextBoxIcon /><Pill $blue>类型1</Pill></PillRow>
        <PillRow><TextBoxIcon /><Pill>总和(累计票..</Pill></PillRow>
        <PillRow><TextBoxIcon /><Pill>CNT(Sheet1)</Pill></PillRow>
      </Pills>
    </Card>
  </Cards>
);

/* ---------- worksheet ---------- */

const Main = styled.main`
  display: flex;
  flex: 1;
  flex-direction: column;
  gap: 12px;
  min-width: 0;
  padding: 0 332px 12px 0;
`;
const Shelf = styled.section`
  display: grid;
  grid-template-columns: 249px 1fr;
  height: 56px;
  background: #fafafa;
  border: 2px solid ${line};
`;
const ShelfName = styled.div`
  display: grid;
  grid-template-columns: 38px 1fr;
  align-items: center;
  padding-left: 12px;
  border-right: 2px solid ${line};
`;
const Sheet = styled.section`
  flex: 1;
  padding: 22px 26px 0 28px;
  background: #fff;
  border: 2px solid ${line};
`;
const SheetTitle = styled.h1`
  margin: 0 0 26px -8px;
  font-size: 40px;
  line-height: 56px;
`;
const Light300 = styled.span`font-weight: 300;`;
const Treemap = styled.div`
  display: flex;
  height: 1066px;
`;
const Split = styled.div<{ $size: number; $dir: "row" | "column" }>`
  display: flex;
  flex: ${(p) => p.$size} 1 0;
  flex-direction: ${(p) => p.$dir};
  gap: 2px;
  min-width: 0;
  min-height: 0;
`;
const Tile = styled.div<{ $size: number; $fill: string }>`
  flex: ${(p) => p.$size} 1 0;
  min-width: 0;
  min-height: 0;
  overflow: hidden;
  background: ${(p) => p.$fill};
  color: #fff;
`;
const TileText = styled.div`
  padding: 15px 0 0 14px;
  line-height: 33px;
  white-space: nowrap;
`;

const green = "#42a84b", red = "#bd0035", dark = "#006d39", beige = "#cbd6c1";
type Node = { size: number; dir?: "row" | "column"; fill?: string; label?: [string, string, string]; kids?: Node[] };
const leaf = (size: number, fill = dark, label?: [string, string, string]): Node => ({ size, fill, label });
const box = (size: number, dir: "row" | "column", kids: Node[]): Node => ({ size, dir, kids });

const tree = box(1, "row", [
  box(832, "column", [leaf(572, green, ["剧情", "1,593K", "808"]), leaf(492, beige)]),
  box(904, "column", [
    box(666, "row", [
      leaf(396, red, ["喜剧", "4,899K", "450"]),
      leaf(256, red, ["动作", "4,639K", "291"]),
      leaf(248, green, ["动画", "1,044K", "282"]),
    ]),
    box(398, "row", [
      leaf(406),
      box(280, "column", [leaf(210), leaf(186, dark, ["战争", "538K", "90"])]),
      box(214, "column", [
        box(174, "row", [leaf(132, green), leaf(80)]),
        box(106, "row", [leaf(116), leaf(58), leaf(36)]),
        box(114, "row", [
          box(132, "column", [box(56, "row", [leaf(70), leaf(60)]), box(56, "row", [leaf(70), leaf(60)])]),
          box(80, "column", [
            box(64, "row", [leaf(44), leaf(34)]),
            box(48, "row", [
              box(32, "column", [leaf(32), leaf(14)]),
              box(46, "column", [box(36, "row", [leaf(14), leaf(14), leaf(14)]), leaf(10)]),
            ]),
          ]),
        ]),
      ]),
    ]),
  ]),
]);

const TreeNode = ({ node }: { node: Node }) =>
  node.kids ? (
    <Split $size={node.size} $dir={node.dir!}>{node.kids.map((k, i) => <TreeNode key={i} node={k} />)}</Split>
  ) : (
    <Tile $size={node.size} $fill={node.fill!}>
      {node.label && (
        <TileText>
          <div>电影类型：{node.label[0]}</div>
          <div>电影票房：<Light300>{node.label[1]}</Light300></div>
          <div>电影数量：<Light300>{node.label[2]}</Light300></div>
        </TileText>
      )}
    </Tile>
  );

const Worksheet = () => (
  <Main>
    <Shelf><ShelfName><ColumnsIcon />列</ShelfName></Shelf>
    <Shelf><ShelfName><RowsIcon />行</ShelfName></Shelf>
    <Sheet>
      <SheetTitle>工作表 <Light300>4</Light300></SheetTitle>
      <Treemap><TreeNode node={tree} /></Treemap>
    </Sheet>
  </Main>
);

/* ---------- bottom bars ---------- */

const SheetTabs = styled.nav`
  display: flex;
  height: 62px;
  color: #555;
  background: #e6e6e6;
  border: solid #ccc;
  border-width: 2px 0;
`;
const SheetTab = styled.button<{ $w: number; $on?: boolean; $first?: boolean }>`
  display: flex;
  align-items: center;
  justify-content: ${(p) => (p.$first ? "flex-start" : "center")};
  gap: 10px;
  width: ${(p) => p.$w}px;
  padding: 2px 0 0 ${(p) => (p.$first ? 19 : 0)}px;
  white-space: nowrap;
  background: ${(p) => (p.$on ? "#fafafa" : "none")};
  border-right: 2px solid #ccc;
`;
const StatusBar = styled.footer`
  display: flex;
  height: 40px;
  padding-left: 24px;
  font-size: 20px;
  line-height: 40px;
  color: #111;
  background: #ebebeb;
`;
const Stat = styled.span`margin-right: 33px; white-space: pre;`;
const StatusSlots = styled.div`
  display: flex;
  margin-left: auto;
`;
const Slot = styled.div<{ $w: number }>`
  display: flex;
  align-items: center;
  justify-content: space-evenly;
  width: ${(p) => p.$w}px;
  border-left: 2px solid #ccc;
`;
const ViewSlot = styled(Slot)`
  justify-content: flex-start;
  gap: 20px;
  padding-left: 16px;
`;
const gridDots = (rows: number[]) =>
  rows.flatMap((y) => [0, 8, 16].map((x) => <rect key={`${x}${y}`} x={x} y={y} width={6} height={6} rx={1} fill="#bdbdbd" stroke="none" />));

const BottomBars = () => (
  <>
    <SheetTabs>
      <SheetTab $w={262} $first><DbIcon small />数据源</SheetTab>
      <SheetTab $w={122}>工作表 1</SheetTab>
      <SheetTab $w={122}>工作表 2</SheetTab>
      <SheetTab $w={122}>工作表 3</SheetTab>
      <SheetTab $w={124} $on>工作表 4</SheetTab>
      <SheetTab $w={64} aria-label="新建工作表"><NewSheetIcon /></SheetTab>
      <SheetTab $w={64} aria-label="新建仪表板"><NewDashIcon /></SheetTab>
      <SheetTab $w={64} aria-label="新建故事"><NewStoryIcon /></SheetTab>
    </SheetTabs>
    <StatusBar>
      <Stat>25 个标记</Stat>
      <Stat>1 行  x  1 列</Stat>
      <Stat>总和(累计票房 （万）): 17,517K</Stat>
      <StatusSlots>
        <Slot $w={254} /><Slot $w={54} /><Slot $w={54} /><Slot $w={94} />
        <Slot $w={142}>
          <PlainButton aria-label="第一个"><Svg w={14} h={14} color="#bdbdbd"><path d="M1 0V14" /><path d="M13 0V14L4 7Z" fill="#bdbdbd" stroke="none" /></Svg></PlainButton>
          <PlainButton aria-label="上一个"><Svg w={10} h={14}><path d="M9 0V14L0 7Z" fill="#bdbdbd" stroke="none" /></Svg></PlainButton>
          <PlainButton aria-label="下一个"><Svg w={10} h={14}><path d="M1 0V14L10 7Z" fill="#bdbdbd" stroke="none" /></Svg></PlainButton>
          <PlainButton aria-label="最后一个"><Svg w={14} h={14} color="#bdbdbd"><path d="M13 0V14" /><path d="M1 0V14L10 7Z" fill="#bdbdbd" stroke="none" /></Svg></PlainButton>
        </Slot>
        <ViewSlot $w={154}>
          <PlainButton aria-label="表排序程序"><Svg w={22} h={22}>{gridDots([0, 8, 16])}</Svg></PlainButton>
          <PlainButton aria-label="幻灯片"><Svg w={22} h={22}><rect width={22} height={14} rx={1} fill="#bdbdbd" stroke="none" />{gridDots([16])}</Svg></PlainButton>
          <PlainButton aria-label="标签"><Svg w={22} h={22}><rect width={22} height={22} rx={1} fill="#666" stroke="none" /></Svg></PlainButton>
        </ViewSlot>
      </StatusSlots>
    </StatusBar>
  </>
);

/* ---------- show me ---------- */

const ShowMe = styled.aside`
  position: absolute;
  top: 8px;
  right: 8px;
  display: flex;
  flex-direction: column;
  width: 408px;
  color: #111;
  filter: drop-shadow(4px 4px 2px rgba(0, 0, 0, 0.3));
`;
const ShowMeTab = styled.h2`
  z-index: 1;
  display: flex;
  align-items: center;
  align-self: flex-end;
  gap: 10px;
  width: 210px;
  height: 74px;
  padding: 0 0 10px 20px;
  font-weight: 500;
  background: #fafafa;
  border: solid #e0e0e0;
  border-width: 2px 2px 0;
`;
const ShowMeBody = styled.div`
  height: 1112px;
  margin-top: -2px;
  padding: 28px 26px;
  background: #fafafa;
  border: 2px solid #e0e0e0;
`;
const Thumbs = styled.div`
  display: grid;
  grid-template-columns: repeat(3, 112px);
  gap: 8px;
`;
const Thumb = styled.button<{ $on?: boolean }>`
  display: grid;
  height: 84px;
  overflow: hidden;
  background: #fff;
  border: ${(p) => (p.$on ? "4px solid #f26322" : "2px solid #e0e0e0")};
  border-radius: 2px;
  > svg { margin: ${(p) => (p.$on ? "-2px" : "0")}; }
`;
const Hints = styled.div`
  display: grid;
  gap: 16px;
  padding: 38px 4px 0;
`;
const HintTitle = styled.p`line-height: 28px;`;
const Hint = styled.p`
  display: flex;
  align-items: center;
  gap: 6px;
  height: 40px;
`;
const HintPill = styled(Pill)`
  width: 98px;
`;

const ShowMePanel = () => (
  <ShowMe>
    <ShowMeTab><ShowMeIcon />智能显示</ShowMeTab>
    <ShowMeBody>
      <Thumbs>
        {thumbs.map((t) => (
          <Thumb key={t.name} aria-label={t.name} $on={t.name === "散点图"}>
            <svg width={108} height={80} viewBox="0 0 324 240" aria-hidden="true">{t.art}</svg>
          </Thumb>
        ))}
      </Thumbs>
      <Hints>
        <HintTitle>对于散点图，尝试</HintTitle>
        <Hint>0 个或多个<HintPill $blue>维度</HintPill></Hint>
        <Hint>2 至 4 个<HintPill>度量</HintPill></Hint>
      </Hints>
    </ShowMeBody>
  </ShowMe>
);

/* ---------- label popup ---------- */

const Popup = styled.section`
  position: absolute;
  top: 598px;
  left: 640px;
  width: 436px;
  height: 498px;
  padding: 32px 14px 0 18px;
  font-size: 22px;
  color: #222;
  background: #fff;
  border: 2px solid #000;
`;
const CheckRow = styled.label`
  display: flex;
  align-items: center;
  justify-content: center;
  gap: 9px;
  height: 28px;
  padding-right: 6px;
`;
const CheckFrame = styled.span`
  display: grid;
  > * { grid-area: 1 / 1; pointer-events: none; }
  > input { appearance: none; width: 28px; height: 28px; background: #fff; border: 1px solid #ccc; border-radius: 7px; box-shadow: 0 1px 3px rgba(0, 0, 0, 0.25); }
`;
const SectionTitle = styled.h2<{ $top: number }>`
  display: flex;
  align-items: center;
  gap: 16px;
  margin-top: ${(p) => p.$top}px;
  &::after { content: ""; flex: 1; height: 2px; background: #bdbdbd; }
`;
const FormRow = styled.div<{ $top: number; $gap: number }>`
  display: flex;
  align-items: center;
  gap: ${(p) => p.$gap}px;
  margin-top: ${(p) => p.$top}px;
  > label { width: 79px; text-align: right; }
`;
const TextField = styled.input`
  && { width: 244px; height: 46px; padding-left: 8px; border: 2px solid #bdbdbd; color: #000; }
`;
const MoreButton = styled.button`
  width: 44px;
  height: 46px;
  margin-left: -1px;
  background: #dcdcdc;
  border: 2px solid #a3a3a3;
`;
const MacSelect = styled.div<{ $w: number }>`
  display: grid;
  grid-template-columns: 1fr 42px;
  align-items: center;
  width: ${(p) => p.$w}px;
  height: 42px;
  background: #fff;
  border-radius: 11px;
  box-shadow: 0 1px 3px rgba(0, 0, 0, 0.35);
  > * { grid-row: 1; }
  > select { grid-column: 1 / 3; width: 100%; height: 100%; padding-left: 16px; }
  > svg { grid-column: 2; justify-self: center; pointer-events: none; }
`;
const Choices = styled.div`
  display: grid;
  grid-template-columns: 190px 190px;
  padding: 11px 0 0 10px;
`;
const Choice = styled.button<{ $on?: boolean }>`
  height: 44px;
  border: 2px solid ${(p) => (p.$on ? "#ccc" : "transparent")};
`;

const LabelPopup = () => (
  <Popup>
    <CheckRow>
      <CheckFrame><input type="checkbox" defaultChecked /><CheckIcon /></CheckFrame>
      显示标记标签
    </CheckRow>
    <SectionTitle $top={30}>标签外观</SectionTitle>
    <FormRow $top={24} $gap={7}>
      <label htmlFor="label-text">文本:</label>
      <TextField id="label-text" type="text" defaultValue="电影类型：<类型1> 电" />
      <MoreButton aria-label="编辑文本">...</MoreButton>
    </FormRow>
    <FormRow $top={16} $gap={18}>
      <label htmlFor="label-font">字体:</label>
      <MacSelect $w={270}><select id="label-font"><option>Tableau Book，9pt..</option></select><UpDownIcon /></MacSelect>
    </FormRow>
    <FormRow $top={20} $gap={18}>
      <label htmlFor="label-align">对齐:</label>
      <MacSelect $w={270}><select id="label-align"><option>自动</option></select><UpDownIcon /></MacSelect>
    </FormRow>
    <SectionTitle $top={38}>要标注的标记</SectionTitle>
    <Choices>
      <Choice $on>全部</Choice><Choice>已选定</Choice>
      <Choice>最小/最大</Choice><Choice>突出显示</Choice>
    </Choices>
  </Popup>
);

/* ---------- edit label dialog ---------- */

const Dialog = styled.section`
  position: absolute;
  top: 506px;
  left: 1124px;
  width: 1148px;
  background: #ebebeb;
  border-radius: 22px;
  box-shadow: 0 0 2px rgba(0, 0, 0, 0.5), 0 36px 72px rgba(0, 0, 0, 0.5);
  color: #000;
`;
const TitleBar = styled.header`
  display: grid;
  grid-template-columns: 1fr auto 1fr;
  align-items: center;
  height: 57px;
  padding: 0 16px;
  background: #eff1f0;
  border-bottom: 1px solid #c6c6c6;
  border-radius: 22px 22px 0 0;
`;
const Lights = styled.div`display: flex; gap: 16px;`;
const Light = styled.button<{ $c: string }>`
  && { width: 24px; height: 24px; border-radius: 50%; background: ${(p) => p.$c}; border: 1px solid rgba(0, 0, 0, 0.12); }
`;
const DialogTitle = styled.h2`
  font-size: 26px;
  font-weight: 700;
  color: #4a4a4a;
`;
const DialogBody = styled.div`padding: 45px 40px 48px;`;
const FormatBar = styled.div`
  display: flex;
  align-items: center;
  gap: 12px;
  padding-left: 10px;
  > :nth-child(1) { margin-right: 20px; }
  > :nth-child(2) { margin-right: 10px; }
`;
const Combo = styled(MacSelect)`
  grid-template-columns: 1fr 32px;
  padding-right: 4px;
  > select { padding-left: 4px; }
`;
const ComboArrow = styled.span`
  grid-column: 2;
  display: grid;
  place-items: center;
  width: 32px;
  height: 32px;
  background: linear-gradient(#1a93ff, #007aff);
  border-radius: 8px;
  pointer-events: none;
`;
const Tight = styled.div`display: flex; gap: 6px;`;
const FormatButton = styled.button<{ $w: number }>`
  display: flex;
  align-items: center;
  justify-content: center;
  gap: 5px;
  width: ${(p) => p.$w}px;
  height: 42px;
  background: #dcdcdc;
  border: 2px solid #a3a3a3;
`;
const Letter = styled.span<{ $kind: "b" | "i" | "u" }>`
  font-family: ${(p) => (p.$kind === "i" ? `"Liberation Serif", serif` : `"Open Sans", sans-serif`)};
  font-style: ${(p) => (p.$kind === "i" ? "italic" : "normal")};
  font-weight: 700;
  font-size: ${(p) => (p.$kind === "i" ? 26 : 22)}px;
  line-height: 24px;
  color: #34435a;
  border-bottom: ${(p) => (p.$kind === "u" ? "2px solid #34435a" : "0")};
`;
const Swatch = styled.span`
  width: 54px;
  height: 30px;
  background: #000;
  border: 2px solid #c4c4c4;
`;
const AlignGroup = styled.div`
  display: flex;
  width: 150px;
  height: 42px;
`;
const AlignButton = styled.button<{ $on?: boolean }>`
  display: grid;
  place-items: center;
  flex: 1;
  background: ${(p) => (p.$on ? "#c3e4ff" : "#e0e0e0")};
  border: 2px solid ${(p) => (p.$on ? "#0a9bff" : "#bdbdbd")};
  & + & { border-left: 0; }
  &:nth-child(2) { border-right: 0; }
`;
const Editor = styled.div`
  height: 400px;
  margin: 16px 0 54px;
  padding: 9px;
  line-height: 34px;
  background: #fff;
  border: 2px solid #b0b0b0;
  outline: none;
`;
const Token = styled.span`
  display: inline-block;
  height: 34px;
  background: #ebebeb;
`;
const TextCaret = styled.span`
  display: inline-block;
  width: 2px;
  height: 32px;
  margin-right: -2px;
  vertical-align: top;
  background: #000;
`;
const DialogFooter = styled.footer`
  display: flex;
  justify-content: space-between;
`;
const ButtonSet = styled.div<{ $gap: number; $w: number }>`
  display: grid;
  grid-auto-flow: column;
  grid-auto-columns: ${(p) => p.$w}px;
  gap: ${(p) => p.$gap}px;
`;
const DialogButton = styled.button<{ $primary?: boolean }>`
  height: 52px;
  font-size: 26px;
  color: ${(p) => (p.$primary ? "#fff" : "#000")};
  background: ${(p) => (p.$primary ? "linear-gradient(#c2c2c2, #d4d4d4)" : "linear-gradient(#e6e6e6, #f8f8f8)")};
  border: 2px solid #b0b0b0;
`;

const DownChevron = () => <Svg w={16} h={10} color="#fff" sw={3}><path d="M2 2L8 7L14 2" strokeLinecap="round" strokeLinejoin="round" /></Svg>;

const EditLabelDialog = () => (
  <Dialog role="dialog" aria-labelledby="dialog-title">
    <TitleBar>
      <Lights>
        <Light $c="#ff5f57" aria-label="关闭" /><Light $c="#d5d7d6" aria-label="最小化" /><Light $c="#28c840" aria-label="缩放" />
      </Lights>
      <DialogTitle id="dialog-title">编辑标签</DialogTitle>
    </TitleBar>
    <DialogBody>
      <FormatBar>
        <Combo $w={274}><select aria-label="字体"><option>Tableau Book</option></select><ComboArrow><DownChevron /></ComboArrow></Combo>
        <Combo $w={112}><select aria-label="字号"><option>9</option></select><ComboArrow><DownChevron /></ComboArrow></Combo>
        <Tight>
          <FormatButton $w={52} aria-label="粗体"><Letter $kind="b">B</Letter></FormatButton>
          <FormatButton $w={52} aria-label="斜体"><Letter $kind="i">I</Letter></FormatButton>
          <FormatButton $w={52} aria-label="下划线"><Letter $kind="u">U</Letter></FormatButton>
        </Tight>
        <FormatButton $w={86} aria-label="颜色"><Swatch /><Caret w={16} h={9} color="#000" /></FormatButton>
        <AlignGroup>
          <AlignButton $on aria-label="左对齐"><AlignIcon kind="left" /></AlignButton>
          <AlignButton aria-label="居中"><AlignIcon kind="center" /></AlignButton>
          <AlignButton aria-label="右对齐"><AlignIcon kind="right" /></AlignButton>
        </AlignGroup>
        <Tight>
          <FormatButton $w={120}>插入<Caret w={16} h={9} color="#000" /></FormatButton>
          <FormatButton $w={52} aria-label="清除"><DeleteIcon /></FormatButton>
        </Tight>
      </FormatBar>
      <Editor role="textbox" aria-multiline="true" aria-label="标签文本" contentEditable suppressContentEditableWarning>
        <div><TextCaret />电影类型：<Token>&lt;类型1&gt;</Token></div>
        <div>电影票房：<Token>&lt;总和(累计票房 （万）)&gt;</Token></div>
        <div>电影数量：<Token>&lt;CNT(Sheet1)&gt;</Token></div>
      </Editor>
      <DialogFooter>
        <ButtonSet $gap={4} $w={145}><DialogButton>重置</DialogButton><DialogButton>预览</DialogButton></ButtonSet>
        <ButtonSet $gap={28} $w={140}><DialogButton>应用</DialogButton><DialogButton>取消</DialogButton><DialogButton $primary>确定</DialogButton></ButtonSet>
      </DialogFooter>
    </DialogBody>
  </Dialog>
);

/* ---------- step annotations ---------- */

type Step = { n: number; x: number; y: number; w: number; h: number; nx: number; ny: number };
const steps: Step[] = [
  { n: 1, x: 422, y: 698, w: 215, h: 281, nx: 366, ny: 825 },
  { n: 2, x: 644, y: 510, w: 83, h: 94, nx: 649, ny: 437 },
  { n: 3, x: 982, y: 720, w: 75, h: 91, nx: 999, ny: 665 },
  { n: 4, x: 1158, y: 600, w: 485, h: 275, nx: 1453, ny: 535 },
  { n: 5, x: 2080, y: 1098, w: 173, h: 97, nx: 2115, ny: 1034 },
];
const StepBox = styled.div<{ $s: Step }>`
  position: absolute;
  left: ${(p) => p.$s.x}px;
  top: ${(p) => p.$s.y}px;
  width: ${(p) => p.$s.w}px;
  height: ${(p) => p.$s.h}px;
  border: 4px solid #f00;
  pointer-events: none;
`;
const StepNumber = styled.span<{ $s: Step }>`
  position: absolute;
  left: ${(p) => p.$s.nx}px;
  top: ${(p) => p.$s.ny}px;
  font-family: "Liberation Sans", sans-serif;
  font-size: 54px;
  line-height: 60px;
  color: #f00;
  pointer-events: none;
`;

export default function App() {
  return (
    <Page>
      <GlobalStyle />
      <TopBar />
      <Body>
        <DataPane />
        <Shelves />
        <Worksheet />
      </Body>
      <BottomBars />
      <LabelPopup />
      <EditLabelDialog />
      <ShowMePanel />
      {steps.map((s) => (
        <React.Fragment key={s.n}>
          <StepBox $s={s} />
          <StepNumber $s={s}>{s.n}</StepNumber>
        </React.Fragment>
      ))}
    </Page>
  );
}
